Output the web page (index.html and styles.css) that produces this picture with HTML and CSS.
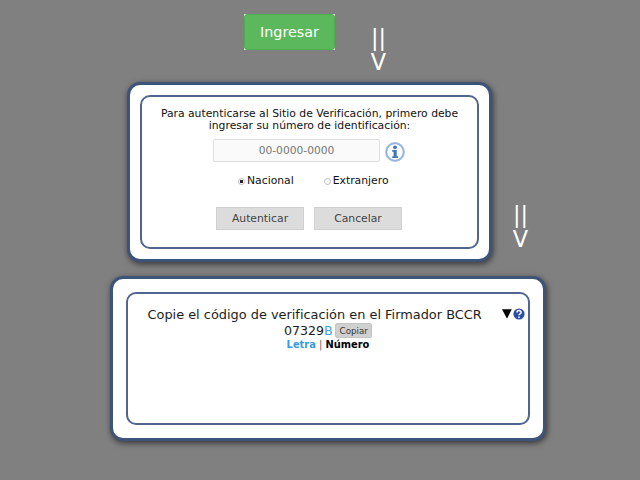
FILE: index.html
```
<!DOCTYPE html>
<html lang="es">
<head>
<meta charset="utf-8">
<title>Ingresar</title>
<link rel="stylesheet" href="styles.css">
</head>
<body>
<header class="top">
  <div class="enter-wrap"><button class="enter">Ingresar</button></div>
  <div class="arrow">||<br>V</div>
</header>
<section class="step">
  <div class="panel auth">
    <div class="frame">
      <p class="prompt"><span>Para autenticarse al Sitio de Verificación, primero debe</span><br><span>ingresar su número de identificación:</span></p>
      <div class="field">
        <input type="text" placeholder="00-0000-0000">
        <svg class="info" viewBox="0 0 20 20"><circle cx="10" cy="10" r="8.9" fill="#fff" stroke="#a5c1e2" stroke-width="2"/><circle cx="10" cy="10" r="8.4" fill="none" stroke="#7fa5d2" stroke-width=".7"/><circle cx="10" cy="5.3" r="1.9" fill="#3e78bb"/><path d="M7.2 8h4.5v6.2h1.4v1.8H7.2v-1.8h1.4V9.7H7.2z" fill="#3e78bb"/></svg>
      </div>
      <div class="choices">
        <label><i class="radio on"></i>Nacional</label>
        <label><i class="radio"></i>Extranjero</label>
      </div>
      <div class="actions"><button>Autenticar</button><button>Cancelar</button></div>
    </div>
  </div>
  <div class="arrow">||<br>V</div>
</section>
<section class="panel code">
  <div class="frame">
    <div class="title">
      <span class="title-text">Copie el código de verificación en el Firmador BCCR</span>
      <span class="tools">
        <svg width="10" height="10" viewBox="0 0 10 10"><path d="M0 .3h9.8L5 9.8z"/></svg>
        <svg width="12" height="12" viewBox="0 0 12 12"><circle cx="6" cy="6" r="5.6" fill="#2b4fa5"/><path d="M4 4.5C4 2 8.1 2 8.1 4.4 8.1 6 6 5.7 6 7.3M6 8.5v1.4" fill="none" stroke="#fff" stroke-width="1.5"/></svg>
      </span>
    </div>
    <div class="value"><span>07329<b>B</b></span><button>Copiar</button></div>
    <div class="modes"><b>Letra</b> <i>|</i> <strong>Número</strong></div>
  </div>
</section>
</body>
</html>
```
FILE: styles.css
```
* { box-sizing: border-box; }
body {
  margin: 0;
  width: 640px;
  height: 480px;
  overflow: hidden;
  background: #808080;
  color: #1c1c1c;
  font-family: "DejaVu Sans", sans-serif;
}
button, input { font-family: inherit; margin: 0; padding: 0; }
.top { display: flex; height: 81.5px; padding: 14px 0 0 244px; align-items: flex-start; }
.enter-wrap { display: flex; background: #fff; border-radius: 1px; }
.enter {
  width: 91px;
  height: 36px;
  border: 1px solid #4cae4c;
  border-radius: 3px;
  background: #5cb85c;
  color: #fff;
  font-size: 14.3px;
}
.arrow {
  width: 20px;
  color: #fff;
  font-size: 22.4px;
  line-height: 24px;
  text-align: center;
}
.top .arrow { margin: 12px 0 0 33.5px; }
.step { display: flex; height: 194.5px; padding-left: 127px; align-items: flex-start; }
.step .arrow { margin: 121.5px 0 0 18.5px; }
.panel {
  background: #fff;
  border: 3px solid #3d547a;
  border-radius: 13px;
  box-shadow: 1px 2px 6px rgba(0, 0, 0, .6);
}
.frame { height: 100%; border: 2px solid #506690; border-radius: 10px; }
.auth { width: 365px; height: 180px; padding: 10px; }
.prompt {
  margin: 11px -5px 0;
  color: #111;
  font-size: 10.8px;
  line-height: 12px;
  text-align: center;
}
.field { display: flex; align-items: center; margin: 7.6px 0 0 71px; gap: 5px; }
.field input {
  width: 167px;
  height: 23px;
  border: 1px solid #ddd;
  border-radius: 2px;
  background: #fafafa;
  font-size: 10.7px;
  text-align: center;
}
.field input::placeholder { color: #777; }
.info { width: 20px; height: 20px; margin-top: 2px; }
.choices { display: flex; gap: 30px; margin: 12px 0 0 96px; font-size: 10.8px; line-height: 14px; color: #111; }
.choices label { display: flex; align-items: center; gap: 2px; }
.radio {
  display: block;
  width: 7px;
  height: 7px;
  border: 1px solid #bbb;
  border-radius: 50%;
  background: #fff;
}
.on { background: radial-gradient(circle, #222 0 1.4px, #fff 1.9px); }
.actions { display: flex; gap: 10px; margin: 19px 0 0 74px; }
.actions button {
  width: 88px;
  height: 23px;
  border: 1px solid #d0d0d0;
  background: #dcdcdc;
  color: #444;
  font-size: 10.8px;
}
.code { width: 436px; height: 164.5px; margin-left: 110px; padding: 13px; }
.title { display: flex; height: 16px; margin: 12px 0 0 19.5px; font-size: 12.9px; line-height: 17px; white-space: nowrap; }
.title-text { width: 335px; }
.tools { display: flex; gap: 1px; margin-left: 19.5px; align-items: center; }
.value { display: flex; height: 17px; gap: 2.5px; margin-left: 156px; font-size: 12.6px; line-height: 16px; align-items: center; }
.value b { color: #429fdc; font-weight: normal; }
.value button {
  width: 37px;
  height: 15px;
  border: 1px solid #c4c4c4;
  border-radius: 2px;
  background: #d0d0d0;
  color: #333;
  font-size: 8.7px;
}
.modes { font-size: 9.9px; line-height: 12px; text-align: center; }
.modes b { color: #389bdc; }
.modes i { color: #666; font-style: normal; }
.modes strong { color: #000; }
```
